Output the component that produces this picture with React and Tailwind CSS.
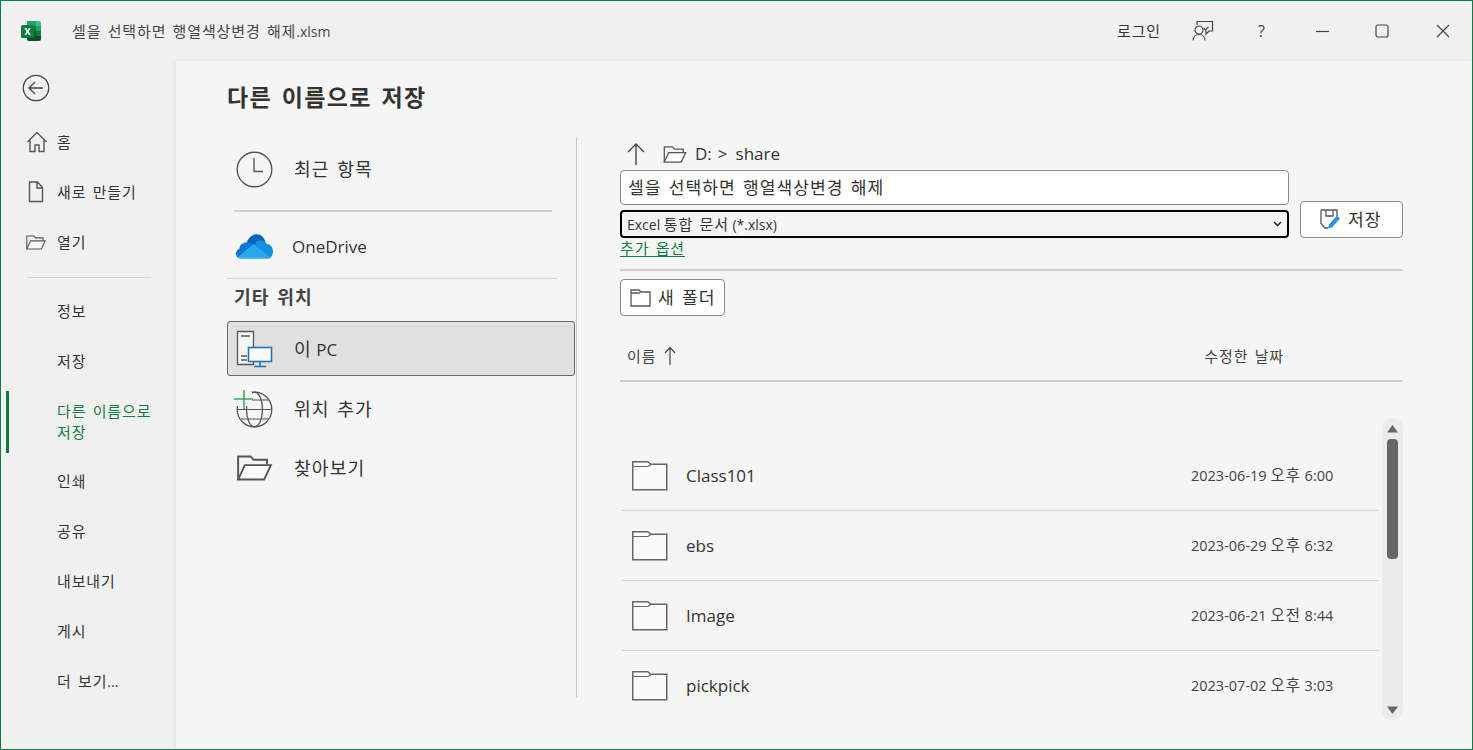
const FONT = "font-['Open_Sans','Noto_Sans_CJK_KR',sans-serif]";

function T({ children }) {
  const parts = String(children).split(/([\uac00-\ud7a3]+(?: [\uac00-\ud7a3]+)*)/);
  return parts.map((p, i) =>
    /[\uac00-\ud7a3]/.test(p) ? (
      <span key={i} className="text-[1.07em] tracking-[0.06em] [word-spacing:0.1em]">{p}</span>
    ) : (
      p
    )
  );
}

function ExcelLogo() {
  return (
    <svg width="21" height="20" viewBox="0 0 21 20">
      <path d="M6 0h9v5H6z" fill="#21a366" />
      <path d="M15 0h3a2 2 0 0 1 2 2v3h-5z" fill="#33c481" />
      <path d="M6 5h9v5H6z" fill="#107c41" />
      <path d="M15 5h5v5h-5z" fill="#21a366" />
      <path d="M6 10h9v5H6z" fill="#185c37" />
      <path d="M15 10h5v5h-5z" fill="#107c41" />
      <path d="M6 15h14v3a2 2 0 0 1-2 2H8a2 2 0 0 1-2-2z" fill="#0e4f2b" />
      <rect x="0" y="4" width="13" height="13" rx="1.5" fill="#107c41" />
      <path d="M3.4 7h1.9l1.3 2.3L7.9 7h1.8L7.6 10.5l2.2 3.5H7.9L6.6 11.6 5.2 14H3.4l2.2-3.5z" fill="#fff" />
    </svg>
  );
}

function Folder() {
  return (
    <svg width="36" height="30" viewBox="0 0 36 30">
      <path d="M.75 .75h15l3 2.500h16v25.500H.75z" fill="#fafafa" stroke="#666" strokeWidth="1.500" />
      <path d="M1 5.500h15l3-2" fill="none" stroke="#666" strokeWidth="1.200" />
    </svg>
  );
}

function OpenFolder({ w = 22, h = 18, stroke = "#555" }) {
  return (
    <svg width={w} height={h} viewBox="0 0 37 27">
      <path d="M1.500 25.500V1.500h13l3 3.500h14v5" fill="none" stroke={stroke} strokeWidth="2" />
      <path d="M1.500 25.500l7-15h27l-7 15z" fill="#fafafa" stroke={stroke} strokeWidth="2" />
    </svg>
  );
}

function NavItem({ icon, label }) {
  return (
    <div className={`flex items-center h-[50px] ${icon ? "pl-[25px]" : "pl-[56px]"} text-[14px] text-[#333]`}>
      {icon && <span className="w-[31px] flex justify-start">{icon}</span>}
      <span><T>{label}</T></span>
    </div>
  );
}

function Place({ icon, label, selected, className = "" }) {
  return (
    <div className={`flex items-center rounded-[3px] border ${selected ? "bg-[#e0e0e0] border-[#666]" : "border-transparent"} ${className}`}>
      <span className="w-[66px] pl-[8px] flex items-center shrink-0">{icon}</span>
      <span className="text-[17px] text-[#333] pt-[2px]"><T>{label}</T></span>
    </div>
  );
}

function FileRow({ name, date, last }) {
  return (
    <div className={`flex items-center h-[70px] shrink-0 ${last ? "" : "border-b border-[#d4d4d4]"}`}>
      <span className="w-[64px] pl-[10px] flex items-center shrink-0"><Folder /></span>
      <span className="flex-1 text-[17px] text-[#333]">{name}</span>
      <span className="w-[188px] text-[14.500px] text-[#444]"><T>{date}</T></span>
    </div>
  );
}

export default function App() {
  return (
    <div className={`${FONT} w-[1473px] h-[750px] border border-[#107c41] bg-[#f0f0f0] flex flex-col overflow-hidden`}>
      <header className="h-[60px] shrink-0 flex items-center">
        <span className="pl-[20px] w-[71px] flex"><ExcelLogo /></span>
        <span className="flex-1 text-[14px] text-[#444]"><T>셀을 선택하면 행열색상변경 해제.xlsm</T></span>
        <span className="text-[14px] text-[#333] w-[75px]"><T>로그인</T></span>
        <span className="w-[66px] flex">
          <svg width="22" height="22" viewBox="0 0 22 22" fill="none" stroke="#444" strokeWidth="1.200">
            <path d="M5 5V1.500h15.500V11H17l-3 3v-3h-1" />
            <circle cx="7" cy="10" r="4" />
            <path d="M1 20.500c0-3.500 2.500-6 6-6s6 2.500 6 6" />
            <path d="M11.500 8l2 2 3-3" />
          </svg>
        </span>
        <span className="w-[58px] text-[16px] text-[#444]">?</span>
        <span className="w-[59px] flex">
          <svg width="14" height="14" viewBox="0 0 14 14"><path d="M0 7.500h13" stroke="#444" strokeWidth="1.200" /></svg>
        </span>
        <span className="w-[61px] flex">
          <svg width="14" height="14" viewBox="0 0 14 14"><rect x="1" y="1" width="12" height="12" rx="2" fill="none" stroke="#444" strokeWidth="1.200" /></svg>
        </span>
        <span className="w-[36px] flex">
          <svg width="14" height="14" viewBox="0 0 14 14"><path d="M1 1l12 12M13 1L1 13" stroke="#444" strokeWidth="1.200" /></svg>
        </span>
      </header>

      <div className="flex flex-1 min-h-0">
        <nav className="w-[175px] shrink-0 flex flex-col pt-[6px]">
          <div className="pl-[21px] h-[42px] flex items-center mb-[8px]">
            <svg width="28" height="28" viewBox="0 0 28 28" fill="none" stroke="#444" strokeWidth="1.300">
              <circle cx="14" cy="14" r="12.700" />
              <path d="M21 14H7M13 8l-6 6 6 6" />
            </svg>
          </div>
          <NavItem label="홈" icon={
            <svg width="22" height="22" viewBox="0 0 22 22" fill="none" stroke="#555" strokeWidth="1.400">
              <path d="M1.500 11L11 1.500 20.500 11M4 9v11.500h5V14h4v6.500h5V9" />
            </svg>
          } />
          <NavItem label="새로 만들기" icon={
            <svg width="20" height="22" viewBox="0 0 20 22" fill="none" stroke="#555" strokeWidth="1.400">
              <path d="M3.500 1h8l5 5.500V20.500h-13zM11 1v6h5.500" />
            </svg>
          } />
          <NavItem label="열기" icon={<OpenFolder w={20} h={15} />} />
          <div className="ml-[26px] w-[124px] h-px bg-[#d4d4d4] mt-[10px] mb-[8px] shrink-0"></div>
          <NavItem label="정보" />
          <NavItem label="저장" />
          <div className="relative pl-[56px] h-[60px] pt-[10px] text-[14px] leading-[20px] text-[#107c41] mt-[5px] shrink-0">
            <span className="absolute left-[5px] top-0 w-[3px] h-[62px] bg-[#107c41]"></span>
            <T>다른 이름으로</T><br /><T>저장</T>
          </div>
          <div className="mt-[5px]"><NavItem label="인쇄" /></div>
          <NavItem label="공유" />
          <NavItem label="내보내기" />
          <NavItem label="게시" />
          <NavItem label="더 보기..." />
        </nav>

        <main className="flex-1 bg-[#f5f5f5] shadow-[-2px_0_4px_rgba(0,0,0,0.05)] pl-[51px] pr-[69px] flex flex-col min-w-0">
          <h1 className="h-[76px] shrink-0 pt-[20px] text-[21.500px] leading-[32px] font-bold text-[#333]"><T>다른 이름으로 저장</T></h1>
          <div className="flex flex-1 min-h-0">
            <section className="w-[350px] h-[560px] shrink-0 border-r border-[#c8c8c8] pr-[1px] flex flex-col">
              <Place label="최근 항목" className="h-[62px] pt-[2px] shrink-0" icon={
                <svg width="37" height="37" viewBox="0 0 37 37" fill="none" stroke="#555" strokeWidth="1.400">
                  <circle cx="18.500" cy="18.500" r="17.300" />
                  <path d="M18 7v13.500h9" />
                </svg>
              } />
              <div className="ml-[7px] w-[318px] h-[2px] bg-[#d0d0d0] mt-[11px] shrink-0"></div>
              <Place label="OneDrive" className="h-[66px] pt-[2px] shrink-0 [&>span:last-child]:-ml-[2px]" icon={
                <svg width="37" height="25" viewBox="0 0 36 24">
                  <path d="M10 10C11 4 16 0 20 0c5 0 8 4 9 9l-9 5z" fill="#0364b8" />
                  <path d="M11 8C6 8 3 11 3.500 14 1 15 0 17 0 19c0 2 1 3 2 4L18 9z" fill="#0f78d4" />
                  <path d="M19 8c4-3 9-2 11 1.500 4 .5 6 3.500 6 7.500 0 2-1 5-3 6L18 14z" fill="#1490df" />
                  <path d="M2 23c1 1 3 1 4 1h24c2 0 3-.5 4-1L17 9.500z" fill="#28a8ea" />
                </svg>
              } />
              <div className="w-[330px] h-px bg-[#d4d4d4] shrink-0"></div>
              <div className="h-[42px] shrink-0 pl-[7px] pb-[4px] flex items-center text-[17px] font-bold text-[#444]"><T>기타 위치</T></div>
              <Place selected label="이 PC" className="h-[55px] w-[348px] shrink-0" icon={
                <svg width="38" height="38" viewBox="0 0 38 38" fill="none">
                  <path d="M1.500 1.500h16v33h-16z" fill="#f5f5f5" stroke="#555" strokeWidth="1.300" />
                  <path d="M5 6h9M5 26h6M5 30h6" stroke="#555" strokeWidth="1.300" />
                  <rect x="12.500" y="17.500" width="23" height="14" fill="#fafafa" stroke="#1e75bb" strokeWidth="1.600" />
                  <path d="M24 32v4M18 36.500h12" stroke="#1e75bb" strokeWidth="1.600" />
                </svg>
              } />
              <Place label="위치 추가" className="h-[66px] w-[348px] shrink-0" icon={
                <svg width="39" height="38" viewBox="0 0 39 38" fill="none" className="-ml-[2px] shrink-0">
                  <circle cx="20.500" cy="19.500" r="17.300" stroke="#555" strokeWidth="1.300" />
                  <ellipse cx="20.500" cy="19.500" rx="8" ry="17.300" stroke="#555" strokeWidth="1.300" />
                  <path d="M3.200 19.500h34.600M7 10h27M7 29h27" stroke="#555" strokeWidth="1.200" />
                  <rect x="2" y="2" width="16" height="14" fill="#f5f5f5" />
                  <path d="M10 0v19M0 9h19" stroke="#4aa564" strokeWidth="1.600" />
                </svg>
              } />
              <Place label="찾아보기" className="h-[52px] w-[348px] shrink-0" icon={<OpenFolder w={37} h={26} />} />
            </section>

            <section className="flex-1 pl-[43px] flex flex-col min-w-0">
              <div className="h-[33px] shrink-0 flex items-center text-[17px] text-[#333] pt-[1px]">
                <svg width="20" height="24" viewBox="0 0 20 24" fill="none" stroke="#444" strokeWidth="1.400" className="ml-[6px] mr-[17px]">
                  <path d="M10 23V2M2 10l8-8 8 8" />
                </svg>
                <OpenFolder w={24} h={17} />
                <span className="ml-[8px]">D:</span>
                <span className="ml-[6px]">&gt;</span>
                <span className="ml-[8px]">share</span>
              </div>
              <div className="flex">
                <div className="w-[669px] shrink-0 flex flex-col">
                  <div className="h-[35px] shrink-0 bg-white border border-[#8a8a8a] rounded-[4px] pl-[7px] flex items-center text-[16px] text-[#333]"><span><T>셀을 선택하면 행열색상변경 해제</T></span></div>
                  <div className="mt-[5px] h-[28px] shrink-0 border-2 border-black rounded-[4px] bg-[#f5f5f5] pl-[5px] pr-[5px] flex items-center justify-between text-[14px] text-[#333]">
                    <span><T>Excel 통합 문서 (*.xlsx)</T></span>
                    <svg width="9" height="6" viewBox="0 0 9 6" fill="none" stroke="#222" strokeWidth="1.500"><path d="M1 1l3.500 3.500L8 1" /></svg>
                  </div>
                  <span className="mt-[1px] h-[20px] text-[14px] leading-[19px] text-[#107c41] underline underline-offset-2 self-start"><T>추가 옵션</T></span>
                </div>
                <div className="ml-[11px] mt-[31px] w-[103px] h-[37px] bg-white border border-[#8a8a8a] rounded-[4px] flex items-center pl-[19px] text-[16px] text-[#333]">
                  <svg width="21" height="21" viewBox="0 0 21 21" fill="none" className="mr-[7px]">
                    <path d="M1 1h16v6M1 1v13.500L5 19h3M6 1v6h7V1" stroke="#555" strokeWidth="1.300" />
                    <path d="M8 19.500l1-4 8-9 3 3-8 9z" fill="#2b8fd8" />
                  </svg>
                  <span><T>저장</T></span>
                </div>
              </div>
              <div className="mt-[10px] h-[2px] bg-[#d0d0d0] shrink-0"></div>
              <div className="mt-[8px] w-[105px] h-[37px] shrink-0 bg-white border border-[#8a8a8a] rounded-[4px] flex items-center pl-[9px] text-[16px] text-[#333]">
                <svg width="21" height="18" viewBox="0 0 21 18" fill="none" stroke="#555" strokeWidth="1.300" className="mr-[7px]">
                  <path d="M1 1h8l2 2h9v14H1zM1 4h9" />
                </svg>
                <span><T>새 폴더</T></span>
              </div>
              <div className="h-[66px] shrink-0 flex items-center border-b-2 border-[#d0d0d0] text-[14px] text-[#444] pt-[20px] pb-[4px]">
                <span className="ml-[7px]"><T>이름</T></span>
                <svg width="12" height="20" viewBox="0 0 12 20" fill="none" stroke="#444" strokeWidth="1.200" className="ml-[8px]">
                  <path d="M6 19V1.500M1 7l5-5.500L11 7" />
                </svg>
                <span className="ml-auto mr-[119px]"><T>수정한 날짜</T></span>
              </div>
              <div className="flex flex-1 min-h-0 overflow-hidden pt-[36px]">
                <div className="ml-[2px] w-[757px] shrink-0 pt-[23px] flex flex-col overflow-hidden h-[332px]">
                  <FileRow name="Class101" date="2023-06-19 오후 6:00" />
                  <FileRow name="ebs" date="2023-06-29 오후 6:32" />
                  <FileRow name="Image" date="2023-06-21 오전 8:44" />
                  <FileRow last name="pickpick" date="2023-07-02 오후 3:03" />
                </div>
                <div className="ml-[3px] w-[21px] h-[302px] rounded-[10px] bg-[#ebebeb] flex flex-col items-center pt-[6px] pb-[5px]">
                  <svg width="11" height="9" viewBox="0 0 11 9" className="shrink-0"><path d="M5.500 1L11 8.500H0z" fill="#666" /></svg>
                  <div className="mt-[6px] w-[11px] h-[120px] rounded-[4px] bg-[#666] shrink-0"></div>
                  <svg width="11" height="9" viewBox="0 0 11 9" className="mt-auto shrink-0"><path d="M5.500 8L11 .5H0z" fill="#666" /></svg>
                </div>
              </div>
            </section>
          </div>
        </main>
      </div>
    </div>
  );
}
